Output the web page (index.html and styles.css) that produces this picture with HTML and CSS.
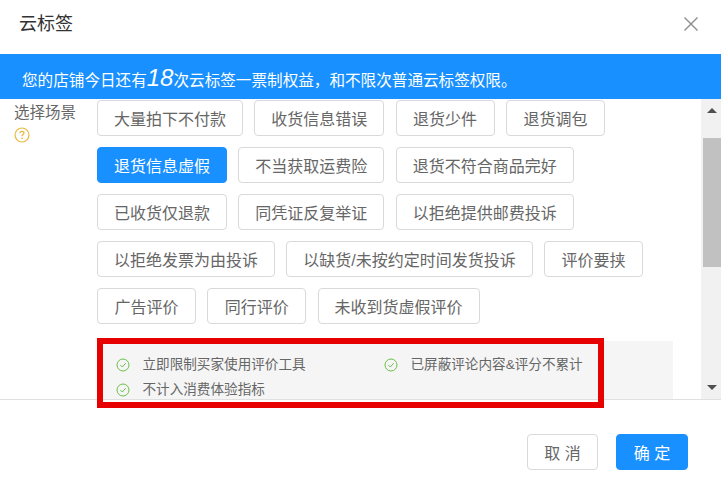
FILE: index.html
```html
<!DOCTYPE html>
<html lang="zh-CN">
<head>
<meta charset="utf-8">
<title>云标签</title>
<link rel="stylesheet" href="styles.css">
</head>
<body>
<div class="modal">
  <header class="head">
    <h1 class="title">云标签</h1>
    <svg class="close" width="14" height="14" viewBox="0 0 14 14"><path d="M.5 .5L13.5 13.5M13.5 .5L.5 13.5" stroke="#8c8c8c" stroke-width="1.4" fill="none"/></svg>
  </header>
  <div class="banner">您的店铺今日还有<em class="num">18</em>次云标签一票制权益，和不限次普通云标签权限。</div>
  <div class="body">
    <div class="content">
      <div class="label">
        <div>选择场景</div>
        <svg class="help" width="16" height="16" viewBox="0 0 16 16"><circle cx="8" cy="8" r="7" fill="none" stroke="#e8b93f" stroke-width="1.2"/><path d="M5.9 6.3C5.9 5 6.9 4.3 8 4.3S10 5 10 6.1C10 7.5 8 7.6 8 9.3" fill="none" stroke="#e8b93f" stroke-width="1.2"/><circle cx="8" cy="11.4" r=".8" fill="#e8b93f"/></svg>
      </div>
      <div class="main">
        <div class="tags">
          <span class="tag">大量拍下不付款</span><span class="tag">收货信息错误</span><span class="tag">退货少件</span><span class="tag">退货调包</span>
          <span class="tag active">退货信息虚假</span><span class="tag">不当获取运费险</span><span class="tag">退货不符合商品完好</span>
          <span class="tag">已收货仅退款</span><span class="tag">同凭证反复举证</span><span class="tag">以拒绝提供邮费投诉</span>
          <span class="tag">以拒绝发票为由投诉</span><span class="tag">以缺货/未按约定时间发货投诉</span><span class="tag">评价要挟</span>
          <span class="tag">广告评价</span><span class="tag">同行评价</span><span class="tag">未收到货虚假评价</span>
        </div>
        <div class="panel">
          <div class="item"><svg class="check" width="14" height="14" viewBox="0 0 14 14"><circle cx="7" cy="7" r="6" fill="none" stroke="#6cbf4b"/><path d="M4.4 7.1L6.3 9L9.7 5.2" fill="none" stroke="#6cbf4b"/></svg>立即限制买家使用评价工具</div>
          <div class="item"><svg class="check" width="14" height="14" viewBox="0 0 14 14"><circle cx="7" cy="7" r="6" fill="none" stroke="#6cbf4b"/><path d="M4.4 7.1L6.3 9L9.7 5.2" fill="none" stroke="#6cbf4b"/></svg>已屏蔽评论内容&amp;评分不累计</div>
          <div class="item"><svg class="check" width="14" height="14" viewBox="0 0 14 14"><circle cx="7" cy="7" r="6" fill="none" stroke="#6cbf4b"/><path d="M4.4 7.1L6.3 9L9.7 5.2" fill="none" stroke="#6cbf4b"/></svg>不计入消费体验指标</div>
        </div>
      </div>
    </div>
    <div class="scrollbar">
      <span class="arrow up"></span>
      <span class="track"><span class="thumb"></span></span>
      <span class="arrow down"></span>
    </div>
  </div>
  <footer class="foot">
    <button class="btn">取 消</button>
    <button class="btn primary">确 定</button>
  </footer>
  <div class="highlight"></div>
</div>
</body>
</html>
```

FILE: styles.css
```css
* { box-sizing: border-box; }
html, body { margin: 0; padding: 0; }
body {
  width: 721px;
  height: 484px;
  overflow: hidden;
  background: #fff;
  font-family: "Liberation Sans", "Noto Sans CJK SC", sans-serif;
  color: #595959;
}
.modal { position: relative; width: 721px; height: 484px; display: flex; flex-direction: column; }
.head { height: 54px; flex: none; display: flex; align-items: center; justify-content: space-between; padding: 0 23px 6px 19px; }
.title { margin: 0; font-size: 18px; font-weight: 400; color: #333; line-height: 28px; }
.close { display: block; }
.banner {
  height: 45px; flex: none; background: #1890ff; color: #fff;
  font-size: 15.6px; line-height: 47px; padding-left: 22px; white-space: nowrap; overflow: hidden;
}
.num { font-family: "Liberation Sans", sans-serif; font-size: 24px; font-style: italic; font-weight: 400; }
.body { height: 301px; flex: none; display: flex; overflow: hidden; border-bottom: 1px solid #e0e0e0; }
.content { width: 701px; flex: none; display: flex; overflow: hidden; }
.label { width: 97px; flex: none; padding: 4px 0 0 14px; font-size: 15.5px; line-height: 20px; color: #666; }
.help { display: block; margin-top: 4px; }
.main { width: 576px; flex: none; padding-top: 1px; }
.tags { display: flex; flex-wrap: wrap; gap: 11px 11.3px; }
.tag {
  height: 36px; min-width: 99px; padding: 1px 16px 0; border: 1px solid #d9d9d9; border-radius: 4px; text-align: center;
  font-size: 16px; line-height: 35px; color: #666; white-space: nowrap; background: #fff;
}
.tag.active { background: #1890ff; border-color: #1890ff; color: #fff; }
.panel {
  margin-top: 17px; height: 70px; background: #f5f5f5;
  display: flex; flex-wrap: wrap; align-content: flex-start; padding: 12px 0 0 19px;
  font-size: 13.6px; line-height: 24px; color: #666;
}
.item { width: 268px; height: 24.5px; display: flex; align-items: center; white-space: nowrap; }
.check { flex: none; margin-right: 12.5px; }
.scrollbar { width: 20px; flex: none; background: #f1f1f1; display: flex; flex-direction: column; align-items: stretch; }
.arrow { height: 39px; flex: none; position: relative; }
.arrow::after { content: ""; position: absolute; left: 6px; border-left: 5px solid transparent; border-right: 5px solid transparent; }
.arrow.up::after { top: 9px; border-bottom: 5px solid #505050; }
.arrow.down { height: 20px; }
.arrow.down::after { top: 6px; border-top: 5px solid #505050; }
.track { flex: 1; padding-left: 2px; }
.thumb { display: block; height: 129px; background: #c1c1c1; }
.foot { flex: 1; display: flex; justify-content: flex-end; align-items: flex-start; gap: 18px; padding: 34px 33px 0 0; }
.btn {
  width: 71px; height: 36px; padding: 0; border: 1px solid #d9d9d9; border-radius: 4px; background: #fff;
  font-family: inherit; font-size: 16px; color: #666;
}
.btn.primary { width: 72px; background: #1890ff; border-color: #1890ff; color: #fff; }
.highlight { position: absolute; left: 97px; top: 338px; width: 507px; height: 70px; border: 6px solid #e60000; }
```
